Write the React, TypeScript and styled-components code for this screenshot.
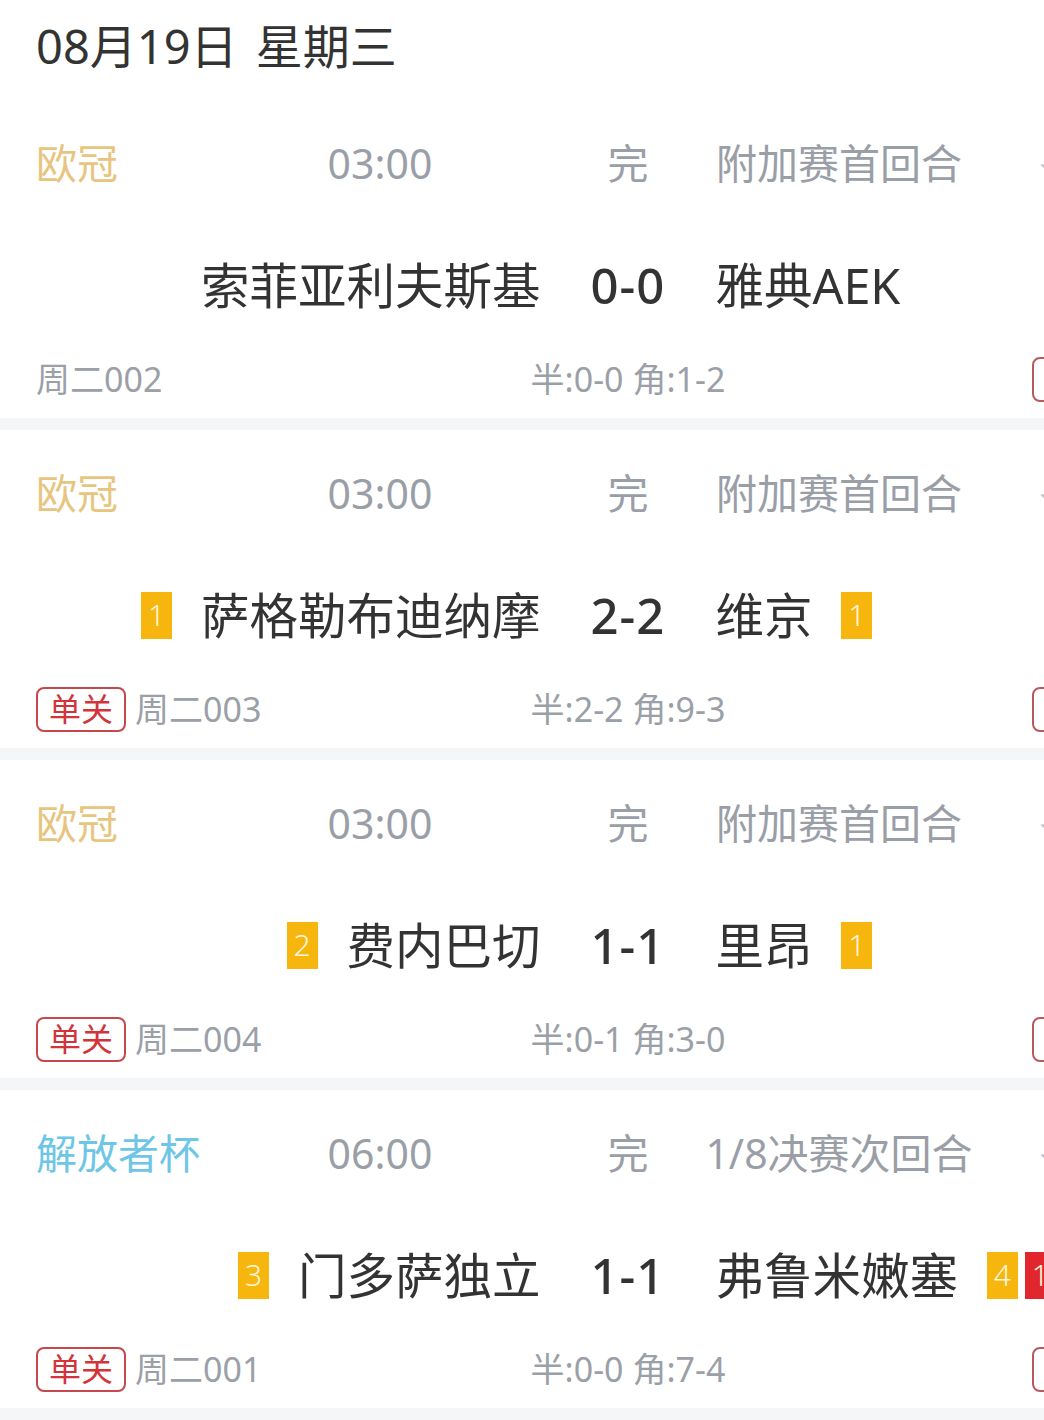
import React from "react";
import styled, { createGlobalStyle } from "styled-components";

const Global = createGlobalStyle`
  html, body {
    margin: 0;
    padding: 0;
    background: #ffffff;
    overflow: hidden;
  }
  body {
    font-family: "Noto Sans", "Noto Sans CJK SC", sans-serif;
    color: #333333;
  }
`;

const Page = styled.div`
  width: 1256px;
  background: #ffffff;
`;

const DateBar = styled.div`
  height: 100px;
  padding-left: 36px;
  display: flex;
  align-items: center;
  font-size: 47px;
  color: #333333;
  line-height: 1;
  padding-bottom: 8px;
  box-sizing: border-box;
  word-spacing: 6px;
`;

const Card = styled.div`
  height: 318px;
  display: grid;
  grid-template-rows: 126px 118px 74px;
  background: #ffffff;
  border-bottom: 12px solid #f5f6f8;
`;

const HeadRow = styled.div`
  display: flex;
  align-items: center;
  padding-left: 36px;
  font-size: 41px;
  line-height: 1;
  color: #9a9ea7;
  white-space: nowrap;
`;

const League = styled.div<{ $color: string }>`
  width: 200px;
  color: ${(p) => p.$color};
`;

const Cell = styled.div<{ $w: number; $ml?: number }>`
  width: ${(p) => p.$w}px;
  margin-left: ${(p) => p.$ml ?? 0}px;
  text-align: center;
`;

const Fav = styled.div`
  margin-left: 54px;
  display: flex;
  align-items: center;
  color: #c4c6cb;
  padding-top: 12px;
`;

const TeamsRow = styled.div`
  display: grid;
  grid-template-columns: 1fr auto 1fr;
  column-gap: 50px;
  align-items: center;
  font-size: 48px;
  line-height: 1;
  color: #333333;
  white-space: nowrap;
`;

const Side = styled.div<{ $home?: boolean }>`
  display: flex;
  align-items: center;
  justify-content: ${(p) => (p.$home ? "flex-end" : "flex-start")};
  gap: 29px;
`;

const TeamName = styled.span`
  font-size: 48.5px;
`;

const Score = styled.div`
  font-weight: 500;
  font-size: 49px;
  letter-spacing: 1px;
`;

const Cards = styled.div`
  display: flex;
  gap: 7px;
`;

const Badge = styled.span<{ $red?: boolean }>`
  display: inline-flex;
  align-items: center;
  justify-content: center;
  min-width: 31px;
  height: 47px;
  padding: 0 3px;
  box-sizing: border-box;
  background: ${(p) => (p.$red ? "#e1262d" : "#f7b60e")};
  color: #fff6dc;
  font-size: 30px;
  font-weight: 300;
`;

const FootRow = styled.div`
  display: grid;
  grid-template-columns: 1fr auto 1fr;
  align-items: center;
  padding: 0 36px;
  font-size: 34px;
  line-height: 1;
  color: #9b9fa7;
  white-space: nowrap;
  padding-bottom: 4px;
`;

const FootLeft = styled.div`
  display: flex;
  align-items: center;
  gap: 9px;
`;

const Tag = styled.span`
  display: inline-flex;
  align-items: center;
  justify-content: center;
  width: 90px;
  height: 45px;
  box-sizing: border-box;
  border: 2px solid #c4484c;
  border-radius: 8px;
  color: #d2343a;
  font-size: 32px;
`;

const FootRight = styled.div`
  display: flex;
  justify-content: flex-end;
`;

const OutBox = styled.span`
  width: 188px;
  height: 45px;
  box-sizing: border-box;
  border: 2px solid #b55a5e;
  border-radius: 8px;
`;

type Match = {
  league: string;
  leagueColor: string;
  time: string;
  round: string;
  home: string;
  away: string;
  score: string;
  homeCards?: { n: string; red?: boolean }[];
  awayCards?: { n: string; red?: boolean }[];
  code: string;
  single: boolean;
  half: string;
};

const gold = "#e8c57f";
const blue = "#6dc6e6";

const matches: Match[] = [
  {
    league: "欧冠",
    leagueColor: gold,
    time: "03:00",
    round: "附加赛首回合",
    home: "索菲亚利夫斯基",
    away: "雅典AEK",
    score: "0-0",
    code: "周二002",
    single: false,
    half: "半:0-0 角:1-2",
  },
  {
    league: "欧冠",
    leagueColor: gold,
    time: "03:00",
    round: "附加赛首回合",
    home: "萨格勒布迪纳摩",
    away: "维京",
    score: "2-2",
    homeCards: [{ n: "1" }],
    awayCards: [{ n: "1" }],
    code: "周二003",
    single: true,
    half: "半:2-2 角:9-3",
  },
  {
    league: "欧冠",
    leagueColor: gold,
    time: "03:00",
    round: "附加赛首回合",
    home: "费内巴切",
    away: "里昂",
    score: "1-1",
    homeCards: [{ n: "2" }],
    awayCards: [{ n: "1" }],
    code: "周二004",
    single: true,
    half: "半:0-1 角:3-0",
  },
  {
    league: "解放者杯",
    leagueColor: blue,
    time: "06:00",
    round: "1/8决赛次回合",
    home: "门多萨独立",
    away: "弗鲁米嫩塞",
    score: "1-1",
    homeCards: [{ n: "3" }],
    awayCards: [{ n: "4" }, { n: "1", red: true }],
    code: "周二001",
    single: true,
    half: "半:0-0 角:7-4",
  },
];

const StarIcon = () => (
  <svg width="40" height="40" viewBox="0 0 24 24" fill="currentColor">
    <path d="M12 2.5l2.9 6 6.6.9-4.8 4.6 1.2 6.5L12 17.4l-5.9 3.1 1.2-6.5L2.5 9.4l6.6-.9z" />
  </svg>
);

const CardList = ({ list }: { list?: { n: string; red?: boolean }[] }) =>
  list && list.length ? (
    <Cards>
      {list.map((c, i) => (
        <Badge key={i} $red={c.red}>
          {c.n}
        </Badge>
      ))}
    </Cards>
  ) : null;

export default function App() {
  return (
    <Page>
      <Global />
      <DateBar>08月19日 星期三</DateBar>
      {matches.map((m, i) => (
        <Card key={i}>
          <HeadRow>
            <League $color={m.leagueColor}>{m.league}</League>
            <Cell $w={288}>{m.time}</Cell>
            <Cell $w={136} $ml={36}>完</Cell>
            <Cell $w={286}>{m.round}</Cell>
            <Fav>
              <StarIcon />
            </Fav>
          </HeadRow>
          <TeamsRow>
            <Side $home>
              <CardList list={m.homeCards} />
              <TeamName>{m.home}</TeamName>
            </Side>
            <Score>{m.score}</Score>
            <Side>
              <TeamName>{m.away}</TeamName>
              <CardList list={m.awayCards} />
            </Side>
          </TeamsRow>
          <FootRow>
            <FootLeft>
              {m.single && <Tag>单关</Tag>}
              <span>{m.code}</span>
            </FootLeft>
            <span>{m.half}</span>
            <FootRight>
              <OutBox />
            </FootRight>
          </FootRow>
        </Card>
      ))}
    </Page>
  );
}
